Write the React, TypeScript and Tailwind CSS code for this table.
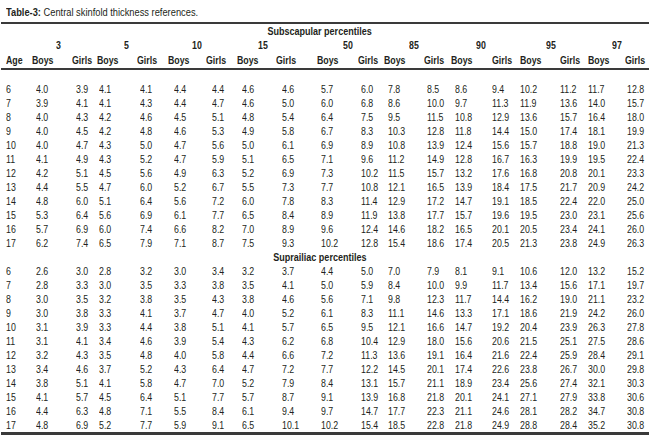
import React from 'react';

const cols =
  'grid grid-cols-[32px_40px_25px_40px_31px_38px_31px_39px_41px_41px_26px_40px_27px_41px_28px_40px_28px_37px_25px]';

// left offset of the numbers inside each column
const dataPad = [
  'pl-[6px]', 'pl-[4px]', 'pl-[4px]', 'pl-[2px]', 'pl-[3px]', 'pl-[6px]', 'pl-[6px]',
  'pl-[5px]', 'pl-[6px]', 'pl-[4px]', 'pl-[3px]', 'pl-[4px]', 'pl-[3px]', 'pl-[4px]',
  'pl-[0px]', 'pl-[0px]', 'pl-[0px]', 'pl-[0px]', 'pl-[2px]',
];

const percentiles = [
  { label: '3', pad: 'pl-[24px]' },
  { label: '5', pad: 'pl-[27px]' },
  { label: '10', pad: 'pl-[24px]' },
  { label: '15', pad: 'pl-[21px]' },
  { label: '50', pad: 'pl-[26px]' },
  { label: '85', pad: 'pl-[25px]' },
  { label: '90', pad: 'pl-[25px]' },
  { label: '95', pad: 'pl-[26px]' },
  { label: '97', pad: 'pl-[24px]' },
];

const subscapular = [
  '6 4.0 3.9 4.1 4.1 4.4 4.4 4.6 4.6 5.7 6.0 7.8 8.5 8.6 9.4 10.2 11.2 11.7 12.8',
  '7 3.9 4.1 4.1 4.3 4.4 4.7 4.6 5.0 6.0 6.8 8.6 10.0 9.7 11.3 11.9 13.6 14.0 15.7',
  '8 4.0 4.3 4.2 4.6 4.5 5.1 4.8 5.4 6.4 7.5 9.5 11.5 10.8 12.9 13.6 15.7 16.4 18.0',
  '9 4.0 4.5 4.2 4.8 4.6 5.3 4.9 5.8 6.7 8.3 10.3 12.8 11.8 14.4 15.0 17.4 18.1 19.9',
  '10 4.0 4.7 4.3 5.0 4.7 5.6 5.0 6.1 6.9 8.9 10.8 13.9 12.4 15.6 15.7 18.8 19.0 21.3',
  '11 4.1 4.9 4.3 5.2 4.7 5.9 5.1 6.5 7.1 9.6 11.2 14.9 12.8 16.7 16.3 19.9 19.5 22.4',
  '12 4.2 5.1 4.5 5.6 4.9 6.3 5.2 6.9 7.3 10.2 11.5 15.7 13.2 17.6 16.8 20.8 20.1 23.3',
  '13 4.4 5.5 4.7 6.0 5.2 6.7 5.5 7.3 7.7 10.8 12.1 16.5 13.9 18.4 17.5 21.7 20.9 24.2',
  '14 4.8 6.0 5.1 6.4 5.6 7.2 6.0 7.8 8.3 11.4 12.9 17.2 14.7 19.1 18.5 22.4 22.0 25.0',
  '15 5.3 6.4 5.6 6.9 6.1 7.7 6.5 8.4 8.9 11.9 13.8 17.7 15.7 19.6 19.5 23.0 23.1 25.6',
  '16 5.7 6.9 6.0 7.4 6.6 8.2 7.0 8.9 9.6 12.4 14.6 18.2 16.5 20.1 20.5 23.4 24.1 26.0',
  '17 6.2 7.4 6.5 7.9 7.1 8.7 7.5 9.3 10.2 12.8 15.4 18.6 17.4 20.5 21.3 23.8 24.9 26.3',
];

const suprailiac = [
  '6 2.6 3.0 2.8 3.2 3.0 3.4 3.2 3.7 4.4 5.0 7.0 7.9 8.1 9.1 10.6 12.0 13.2 15.2',
  '7 2.8 3.3 3.0 3.5 3.3 3.8 3.5 4.1 5.0 5.9 8.4 10.0 9.9 11.7 13.4 15.6 17.1 19.7',
  '8 3.0 3.5 3.2 3.8 3.5 4.3 3.8 4.6 5.6 7.1 9.8 12.3 11.7 14.4 16.2 19.0 21.1 23.2',
  '9 3.0 3.8 3.3 4.1 3.7 4.7 4.0 5.2 6.1 8.3 11.1 14.6 13.3 17.1 18.6 21.9 24.2 26.0',
  '10 3.1 3.9 3.3 4.4 3.8 5.1 4.1 5.7 6.5 9.5 12.1 16.6 14.7 19.2 20.4 23.9 26.3 27.8',
  '11 3.1 4.1 3.4 4.6 3.9 5.4 4.3 6.2 6.8 10.4 12.9 18.0 15.6 20.6 21.5 25.1 27.5 28.6',
  '12 3.2 4.3 3.5 4.8 4.0 5.8 4.4 6.6 7.2 11.3 13.6 19.1 16.4 21.6 22.4 25.9 28.4 29.1',
  '13 3.4 4.6 3.7 5.2 4.3 6.4 4.7 7.2 7.7 12.2 14.5 20.1 17.4 22.6 23.8 26.7 30.0 29.8',
  '14 3.8 5.1 4.1 5.8 4.7 7.0 5.2 7.9 8.4 13.1 15.7 21.1 18.9 23.4 25.6 27.4 32.1 30.3',
  '15 4.1 5.7 4.5 6.4 5.1 7.7 5.7 8.7 9.1 13.9 16.8 21.8 20.1 24.1 27.1 27.9 33.8 30.6',
  '16 4.4 6.3 4.8 7.1 5.5 8.4 6.1 9.4 9.7 14.7 17.7 22.3 21.1 24.6 28.1 28.2 34.7 30.8',
  '17 4.8 6.9 5.2 7.7 5.9 9.1 6.5 10.1 10.2 15.4 18.5 22.8 21.8 24.9 28.8 28.4 35.2 30.8',
];

const headerCells = ['Age'].concat(percentiles.flatMap(() => ['Boys', 'Girls']));

// the print face is condensed; squeeze the Arial-width glyphs to match
const Narrow = ({ children }: { children: React.ReactNode }) => (
  <span className="inline-block origin-left scale-x-[0.8] whitespace-nowrap">{children}</span>
);

const DataRows = ({ rows }: { rows: string[] }) => (
  <>
    {rows.map((row) => (
      <div key={row} className={`${cols} h-[14px] leading-[14px]`}>
        {row.split(' ').map((v, i) => (
          <div key={i} className={dataPad[i]}>
            <Narrow>{v}</Narrow>
          </div>
        ))}
      </div>
    ))}
  </>
);

const SectionTitle = ({ children }: { children: React.ReactNode }) => (
  <div className="h-[14px] leading-[14px] text-center pr-[10px] font-bold">
    <span className="inline-block scale-x-[0.82] whitespace-nowrap">{children}</span>
  </div>
);

export default function App() {
  return (
    <div
      className="w-[650px] h-[442px] bg-white text-[#231f20] text-[11px] overflow-hidden pt-[6px]"
      style={{ fontFamily: "'Liberation Sans Narrow', 'Liberation Sans', Arial, sans-serif" }}
    >
      <div className="pl-[6px] h-[14px] leading-[14px] text-[10px]">
        <span className="inline-block origin-left scale-x-[0.93] whitespace-nowrap">
          <span className="font-bold">Table-3:</span> Central skinfold thickness references.
        </span>
      </div>

      <div className="mt-[2px] mx-[1px] border-t-2 border-[#3a3a3a]" />

      <SectionTitle>Subscapular percentiles</SectionTitle>

      <div className={`${cols} h-[14px] leading-[14px] font-bold`}>
        <div />
        {percentiles.map((p) => (
          <div key={p.label} className={`col-span-2 ${p.pad}`}>
            <Narrow>{p.label}</Narrow>
          </div>
        ))}
      </div>

      <div className={`${cols} h-[16px] leading-[16px] font-bold`}>
        {headerCells.map((h, i) => (
          <div key={i} className={i === 0 ? 'pl-[6px]' : ''}>
            <Narrow>{h}</Narrow>
          </div>
        ))}
      </div>

      <div className="mx-[1px] border-t-2 border-[#3a3a3a]" />

      <div className="pt-[12px]">
        <DataRows rows={subscapular} />
        <SectionTitle>Suprailiac percentiles</SectionTitle>
        <DataRows rows={suprailiac} />
      </div>

      <div className="mx-[1px] border-t-[3px] border-[#3a3a3a]" />
    </div>
  );
}
